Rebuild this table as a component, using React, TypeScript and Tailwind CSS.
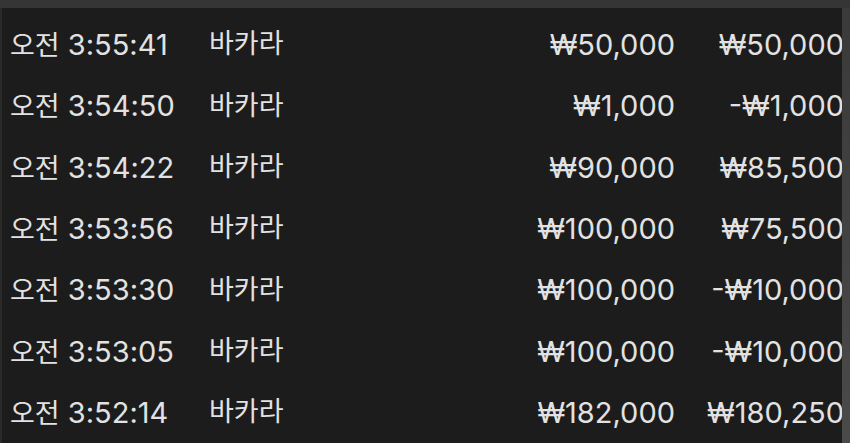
const rows = [
  { time: '3:55:41', game: '바카라', bet: '₩50,000', result: '₩50,000' },
  { time: '3:54:50', game: '바카라', bet: '₩1,000', result: '-₩1,000' },
  { time: '3:54:22', game: '바카라', bet: '₩90,000', result: '₩85,500' },
  { time: '3:53:56', game: '바카라', bet: '₩100,000', result: '₩75,500' },
  { time: '3:53:30', game: '바카라', bet: '₩100,000', result: '-₩10,000' },
  { time: '3:53:05', game: '바카라', bet: '₩100,000', result: '-₩10,000' },
  { time: '3:52:14', game: '바카라', bet: '₩182,000', result: '₩180,250' },
];

export default function App() {
  return (
    <div
      className="w-[850px] h-[443px] overflow-hidden bg-[#1c1c1c] flex flex-col text-[#e2e2e2]"
      style={{ fontFamily: 'Inter, "Noto Sans CJK KR", sans-serif' }}
    >
      <div className="h-[8px] bg-[#353535] shrink-0" />
      <div className="flex flex-1 min-h-0">
        <div className="flex-1 border-l-2 border-[#2a2a2a] pt-[6px]">
          {rows.map((r, i) => (
            <div key={i} className="h-[61.33px] flex items-center text-[29px]">
              <div className="w-[207px] pl-[8px] whitespace-nowrap">
                <span className="text-[27px]">오전</span> {r.time}
              </div>
              <div className="flex-1 whitespace-nowrap text-[27px]">{r.game}</div>
              <div className="w-[200px] text-right whitespace-nowrap">{r.bet}</div>
              <div className="w-[169px] -mr-[2px] text-right whitespace-nowrap">{r.result}</div>
            </div>
          ))}
        </div>
        <div className="w-[8px] shrink-0 bg-gradient-to-b from-[#3a3a3a] to-[#4a4a4a]" />
      </div>
    </div>
  );
}
